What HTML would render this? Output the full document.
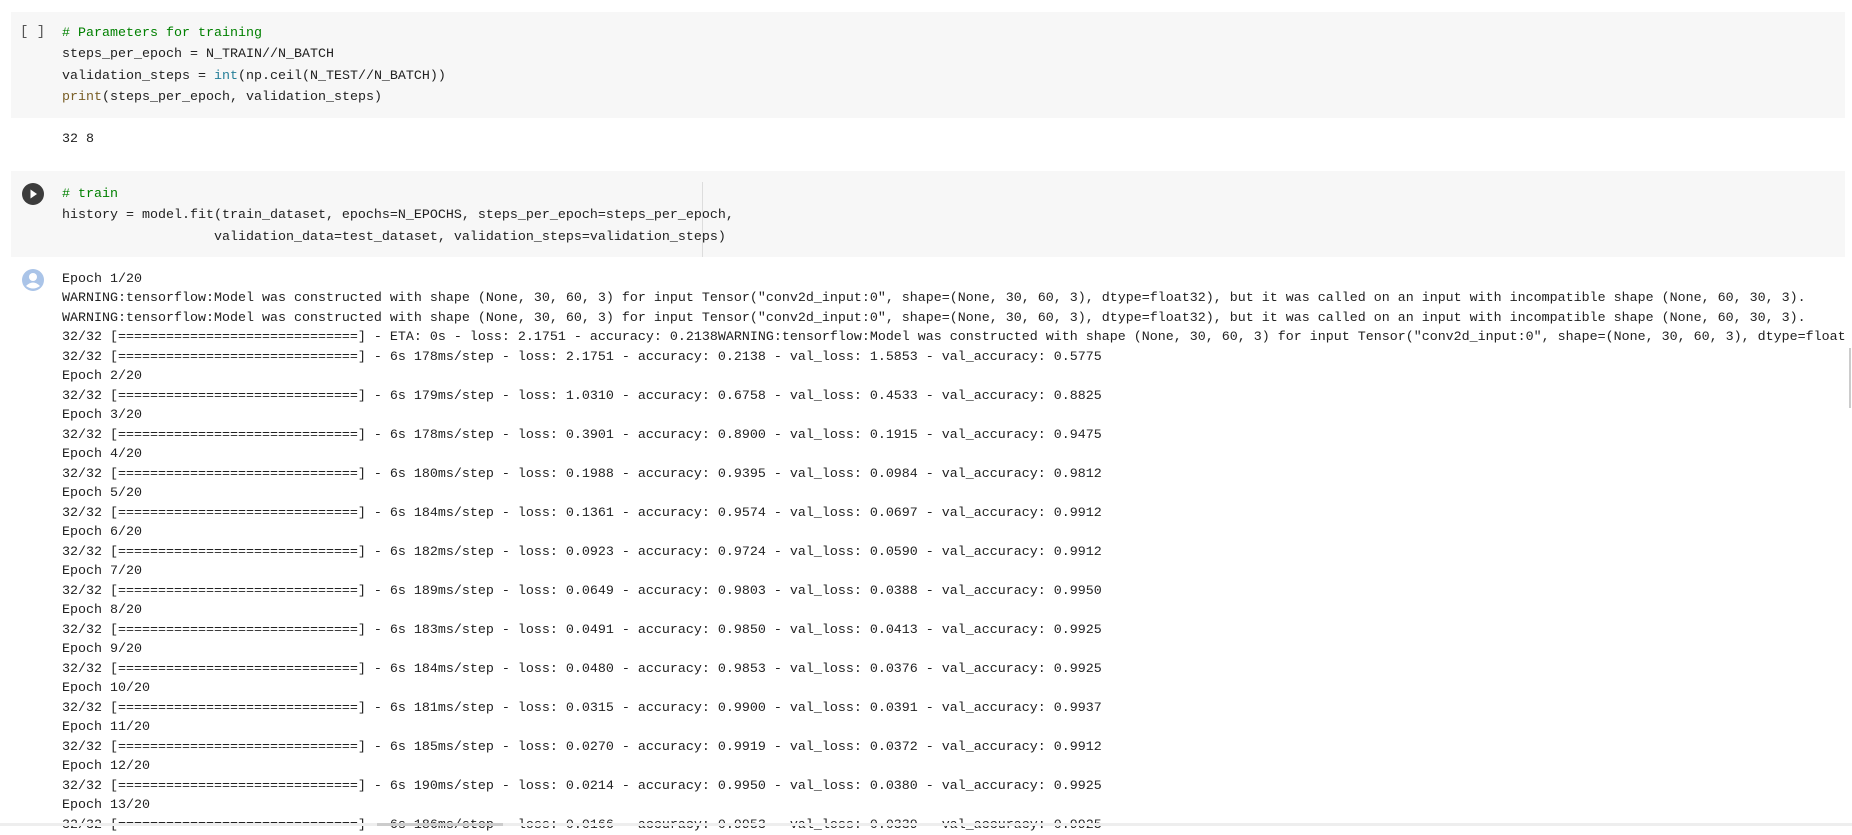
<!DOCTYPE html>
<html><head><meta charset="utf-8"><style>
body{margin:0;width:1852px;height:826px;background:#fff;position:relative;overflow:hidden;font-family:"Liberation Mono","Noto Sans CJK KR",monospace;font-size:13.33px;color:#212121}
.cell{position:absolute;left:11px;right:7px;background:#f7f7f7}
pre{margin:0;font:inherit;position:absolute;left:62px;white-space:pre}
.c{color:#008000}.b{color:#267f99}.f{color:#795e26}
</style></head><body>
<div class="cell" style="top:12px;height:106px"></div>
<div style="position:absolute;left:20px;top:24px;font-size:14px;color:#555">[ ]</div>
<pre style="top:23px;line-height:21.3px"><span class="c"># Parameters for training</span>
steps_per_epoch = N_TRAIN//N_BATCH
validation_steps = <span class="b">int</span>(np.ceil(N_TEST//N_BATCH))
<span class="f">print</span>(steps_per_epoch, validation_steps)</pre>
<pre style="top:132px">32 8</pre>
<div class="cell" style="top:171px;height:86px"></div>
<div style="position:absolute;left:702px;top:182px;width:1px;height:75px;background:#ddd"></div>
<svg style="position:absolute;left:22px;top:183px" width="22" height="22"><circle cx="11" cy="11" r="11" fill="#3c3c3c"/><path d="M8.5 6.5 L15 11 L8.5 15.5Z" fill="#fff"/></svg>
<pre style="top:184px;line-height:21.3px"><span class="c"># train</span>
history = model.fit(train_dataset, epochs=N_EPOCHS, steps_per_epoch=steps_per_epoch,
                   validation_data=test_dataset, validation_steps=validation_steps)</pre>
<svg style="position:absolute;left:22px;top:269px" width="22" height="22"><circle cx="11" cy="11" r="11" fill="#aac4e8"/><circle cx="11" cy="8" r="4" fill="#fff"/><path d="M4 17 Q11 10 18 17 Q11 22 4 17Z" fill="#fff"/></svg>
<pre style="top:269.5px;line-height:19.5px">Epoch 1/20
WARNING:tensorflow:Model was constructed with shape (None, 30, 60, 3) for input Tensor("conv2d_input:0", shape=(None, 30, 60, 3), dtype=float32), but it was called on an input with incompatible shape (None, 60, 30, 3).
WARNING:tensorflow:Model was constructed with shape (None, 30, 60, 3) for input Tensor("conv2d_input:0", shape=(None, 30, 60, 3), dtype=float32), but it was called on an input with incompatible shape (None, 60, 30, 3).
32/32 [==============================] - ETA: 0s - loss: 2.1751 - accuracy: 0.2138WARNING:tensorflow:Model was constructed with shape (None, 30, 60, 3) for input Tensor("conv2d_input:0", shape=(None, 30, 60, 3), dtype=float
32/32 [==============================] - 6s 178ms/step - loss: 2.1751 - accuracy: 0.2138 - val_loss: 1.5853 - val_accuracy: 0.5775
Epoch 2/20
32/32 [==============================] - 6s 179ms/step - loss: 1.0310 - accuracy: 0.6758 - val_loss: 0.4533 - val_accuracy: 0.8825
Epoch 3/20
32/32 [==============================] - 6s 178ms/step - loss: 0.3901 - accuracy: 0.8900 - val_loss: 0.1915 - val_accuracy: 0.9475
Epoch 4/20
32/32 [==============================] - 6s 180ms/step - loss: 0.1988 - accuracy: 0.9395 - val_loss: 0.0984 - val_accuracy: 0.9812
Epoch 5/20
32/32 [==============================] - 6s 184ms/step - loss: 0.1361 - accuracy: 0.9574 - val_loss: 0.0697 - val_accuracy: 0.9912
Epoch 6/20
32/32 [==============================] - 6s 182ms/step - loss: 0.0923 - accuracy: 0.9724 - val_loss: 0.0590 - val_accuracy: 0.9912
Epoch 7/20
32/32 [==============================] - 6s 189ms/step - loss: 0.0649 - accuracy: 0.9803 - val_loss: 0.0388 - val_accuracy: 0.9950
Epoch 8/20
32/32 [==============================] - 6s 183ms/step - loss: 0.0491 - accuracy: 0.9850 - val_loss: 0.0413 - val_accuracy: 0.9925
Epoch 9/20
32/32 [==============================] - 6s 184ms/step - loss: 0.0480 - accuracy: 0.9853 - val_loss: 0.0376 - val_accuracy: 0.9925
Epoch 10/20
32/32 [==============================] - 6s 181ms/step - loss: 0.0315 - accuracy: 0.9900 - val_loss: 0.0391 - val_accuracy: 0.9937
Epoch 11/20
32/32 [==============================] - 6s 185ms/step - loss: 0.0270 - accuracy: 0.9919 - val_loss: 0.0372 - val_accuracy: 0.9912
Epoch 12/20
32/32 [==============================] - 6s 190ms/step - loss: 0.0214 - accuracy: 0.9950 - val_loss: 0.0380 - val_accuracy: 0.9925
Epoch 13/20
32/32 [==============================] - 6s 186ms/step - loss: 0.0166 - accuracy: 0.9953 - val_loss: 0.0339 - val_accuracy: 0.9925</pre>
<div style="position:absolute;left:1849px;top:348px;width:2px;height:60px;background:#ccc"></div>
<div style="position:absolute;left:0;top:823px;width:1852px;height:3px;background:#eee"></div>
<div style="position:absolute;left:377px;top:823px;width:126px;height:3px;background:#ccc"></div>
</body></html>
